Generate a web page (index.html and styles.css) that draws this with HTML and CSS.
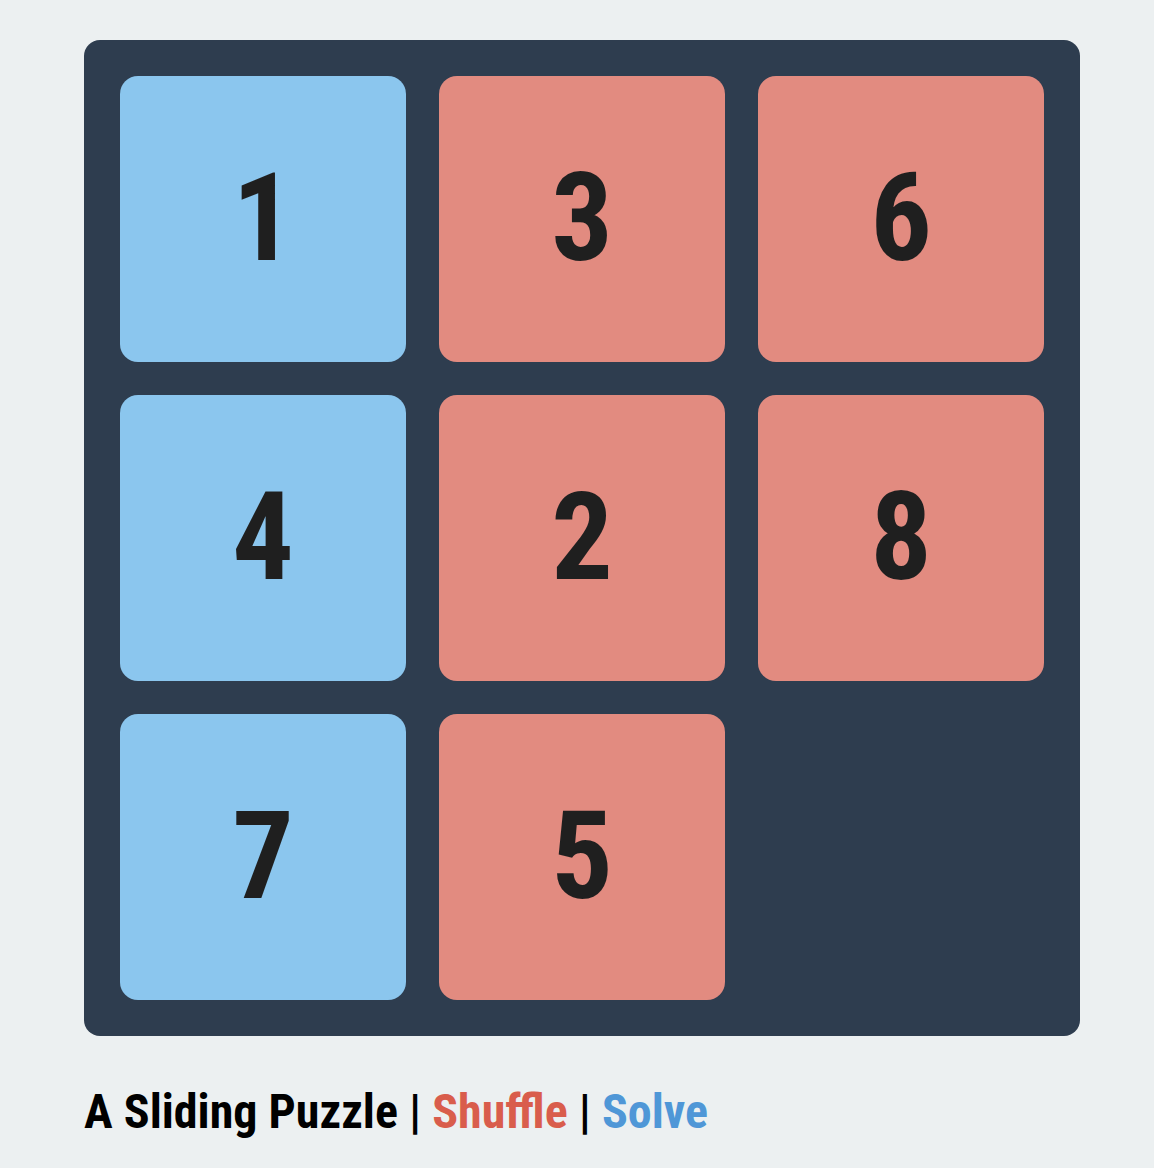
FILE: index.html
```html
<!DOCTYPE html>
<html lang="en">
<head>
    <meta charset="UTF-8">
    <title>A Sliding Puzzle</title>
    <link rel="stylesheet" href="styles.css">
</head>
<body>
    <div class="puzzle">
        <div class="board">
            <div class="tile left">1</div>
            <div class="tile">3</div>
            <div class="tile">6</div>
            <div class="tile left">4</div>
            <div class="tile">2</div>
            <div class="tile">8</div>
            <div class="tile left">7</div>
            <div class="tile">5</div>
            <div class="tile empty"></div>
        </div>

        <p class="caption">
            A Sliding Puzzle | <span class="shuffle">Shuffle</span> | <span class="solve">Solve</span>
        </p>
    </div>
</body>
</html>
```

FILE: styles.css
```css
* {
    margin: 0;
    padding: 0;
    box-sizing: border-box;
}

body {
    font-family: "Roboto Condensed", Roboto, "Liberation Sans", sans-serif;
    font-stretch: condensed;
    background: #ecf0f1;
    color: #1f1f1f;
}

.puzzle {
    padding: 40px 0 0 84px;
}

.board {
    width: 996px;
    height: 996px;
    padding: 36px;
    background: #2e3d4f;
    border-radius: 16px;
    display: grid;
    grid-template-columns: repeat(3, 286px);
    grid-template-rows: repeat(3, 286px);
    gap: 33px;
}

.tile {
    background: #e28b80;
    border-radius: 18px;
    display: flex;
    align-items: center;
    justify-content: center;
    font-size: 122px;
    font-weight: 700;
    line-height: 1;
}

.tile.left {
    background: #8bc6ee;
}

.tile.empty {
    background: transparent;
}

.caption {
    margin-top: 47px;
    font-size: 48px;
    font-weight: 700;
    color: #000;
    line-height: 1.2;
}

.shuffle {
    color: #d95d4c;
}

.solve {
    color: #4f97d7;
}
```
